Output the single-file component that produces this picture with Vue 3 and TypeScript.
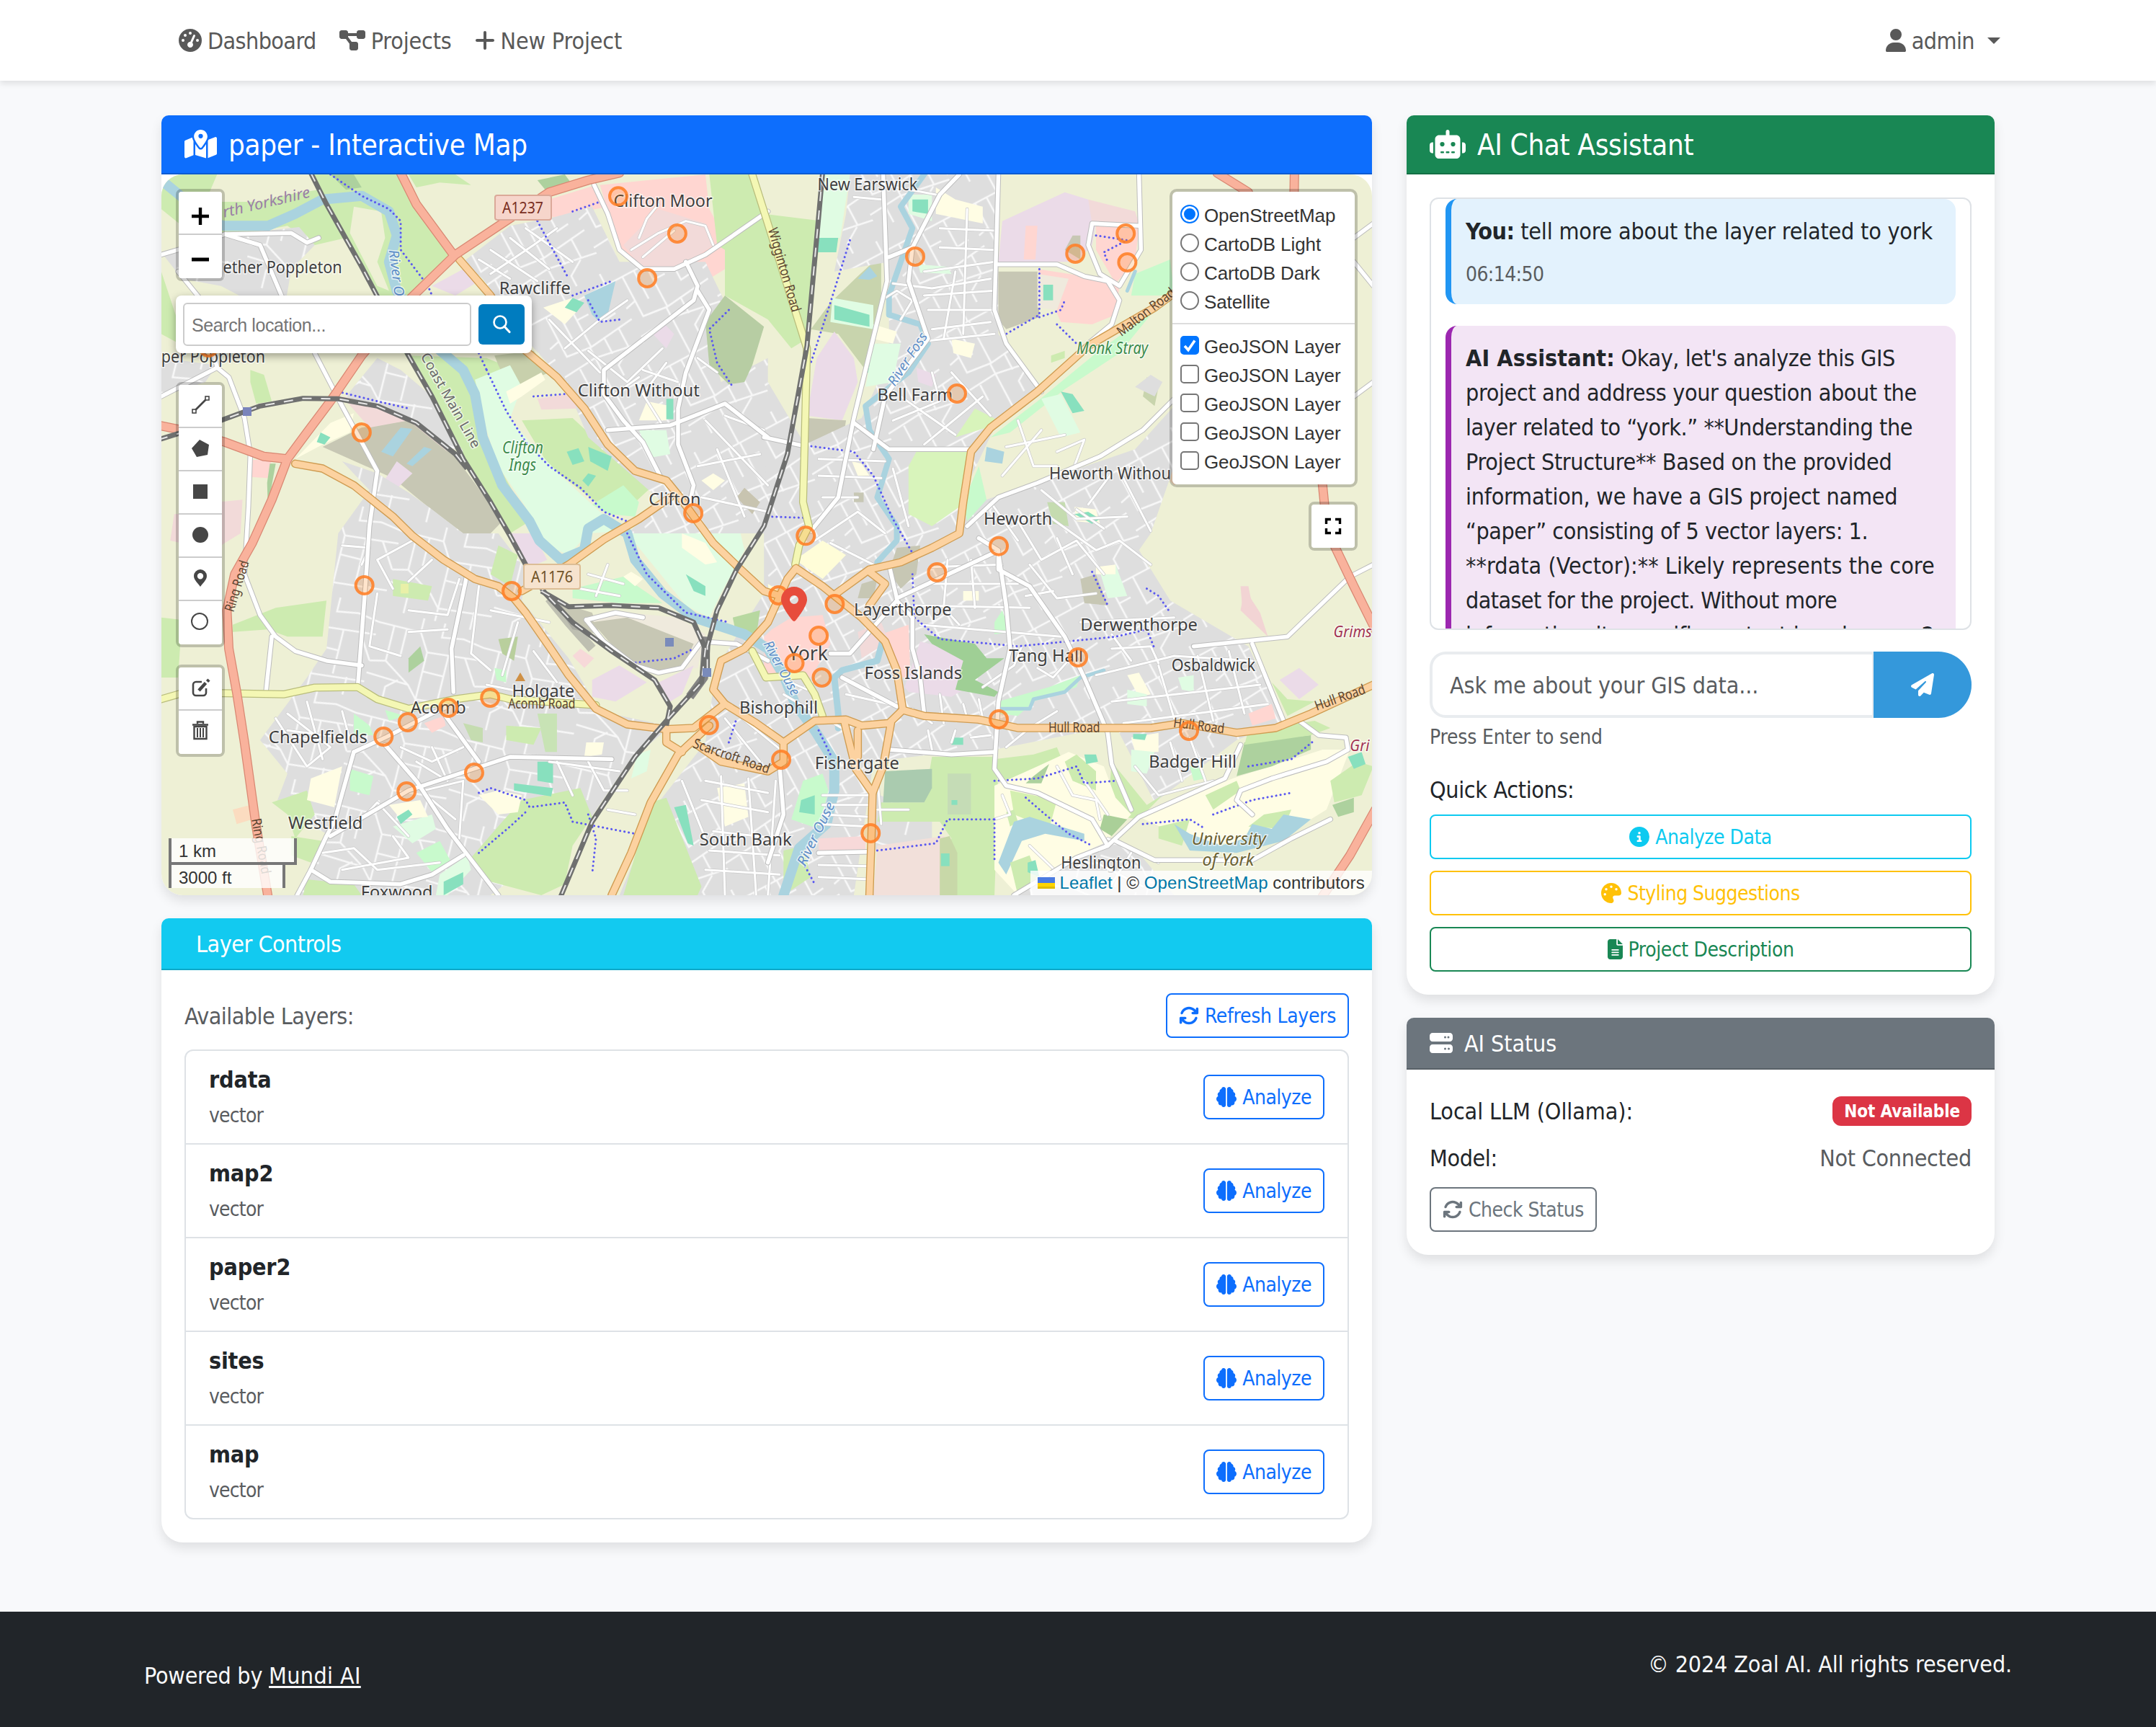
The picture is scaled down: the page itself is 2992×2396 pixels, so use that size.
<script setup lang="ts">
interface Icon { w: number; d: string }

const icons: Record<string, Icon> = {
  gauge: { w: 512, d: 'M0 256a256 256 0 1 1 512 0A256 256 0 1 1 0 256zM288 96a32 32 0 1 0 -64 0 32 32 0 1 0 64 0zM256 416c35.3 0 64-28.7 64-64c0-17.4-6.9-33.1-18.1-44.6L366 161.7c5.3-12.1-.2-26.3-12.3-31.6s-26.3 .2-31.6 12.3L257.9 288c-.6 0-1.3 0-1.9 0c-35.3 0-64 28.7-64 64s28.7 64 64 64zM176 144a32 32 0 1 0 -64 0 32 32 0 1 0 64 0zM96 288a32 32 0 1 0 0-64 32 32 0 1 0 0 64zm352-32a32 32 0 1 0 -64 0 32 32 0 1 0 64 0z' },
  diagram: { w: 576, d: 'M0 80C0 53.5 21.5 32 48 32h96c26.5 0 48 21.5 48 48V96H384V80c0-26.5 21.5-48 48-48h96c26.5 0 48 21.5 48 48v96c0 26.5-21.5 48-48 48H432c-26.5 0-48-21.5-48-48V160H192v16c0 1.7-.1 3.4-.3 5L272 288h96c26.5 0 48 21.5 48 48v96c0 26.5-21.5 48-48 48H272c-26.5 0-48-21.5-48-48V336c0-1.7 .1-3.4 .3-5L144 224H48c-26.5 0-48-21.5-48-48V80z' },
  plus: { w: 448, d: 'M256 80c0-17.7-14.3-32-32-32s-32 14.3-32 32V224H48c-17.7 0-32 14.3-32 32s14.3 32 32 32H192V432c0 17.7 14.3 32 32 32s32-14.3 32-32V288H400c17.7 0 32-14.3 32-32s-14.3-32-32-32H256V80z' },
  user: { w: 448, d: 'M224 256A128 128 0 1 0 224 0a128 128 0 1 0 0 256zm-45.7 48C79.8 304 0 383.8 0 482.3C0 498.7 13.3 512 29.7 512H418.3c16.4 0 29.7-13.3 29.7-29.7C448 383.8 368.2 304 269.7 304H178.3z' },
  map: { w: 576, d: 'M408 120c0 54.6-73.1 151.9-105.2 192c-7.7 9.6-22 9.6-29.6 0C241.1 271.9 168 174.6 168 120C168 53.7 221.7 0 288 0s120 53.7 120 120zm8 80.4c3.5-6.9 6.7-13.8 9.6-20.6c.5-1.2 1-2.5 1.5-3.7l116-46.4C558.9 123.4 576 135 576 152V422.8c0 9.8-6 18.6-15.1 22.3L416 503V200.4zM137.6 138.3c2.4 14.1 7.2 28.3 12.8 41.5c2.9 6.8 6.1 13.7 9.6 20.6V451.8L32.9 502.7C17.1 509 0 497.4 0 480.4V209.6c0-9.8 6-18.6 15.1-22.3l122.6-49zM327.8 332c13.9-17.4 35.7-45.7 56.2-77V504.3L192 449.4V255c20.5 31.3 42.3 59.6 56.2 77c20.5 25.6 59.1 25.6 79.6 0zM288 152a40 40 0 1 0 0-80 40 40 0 1 0 0 80z' },
  robot: { w: 640, d: 'M320 0c17.7 0 32 14.3 32 32V96H472c39.8 0 72 32.2 72 72V440c0 39.8-32.2 72-72 72H168c-39.8 0-72-32.2-72-72V168c0-39.8 32.2-72 72-72H288V32c0-17.7 14.3-32 32-32zM208 384c-8.8 0-16 7.2-16 16s7.2 16 16 16h32c8.8 0 16-7.2 16-16s-7.2-16-16-16H208zm96 0c-8.8 0-16 7.2-16 16s7.2 16 16 16h32c8.8 0 16-7.2 16-16s-7.2-16-16-16H304zm96 0c-8.8 0-16 7.2-16 16s7.2 16 16 16h32c8.8 0 16-7.2 16-16s-7.2-16-16-16H400zM264 256a40 40 0 1 0 -80 0 40 40 0 1 0 80 0zm152 40a40 40 0 1 0 0-80 40 40 0 1 0 0 80zM48 224H64V416H48c-26.5 0-48-21.5-48-48V272c0-26.5 21.5-48 48-48zm544 0c26.5 0 48 21.5 48 48v96c0 26.5-21.5 48-48 48H576V224h16z' },
  plane: { w: 512, d: 'M498.1 5.6c10.1 7 15.4 19.1 13.5 31.2l-64 416c-1.5 9.7-7.4 18.2-16 23s-18.9 5.4-28 1.6L284 427.7l-68.5 74.1c-8.9 9.7-22.9 12.9-35.2 8.1S160 493.2 160 480V396.4c0-4 1.5-7.8 4.2-10.7L331.8 202.8c5.8-6.3 5.6-16-.4-22s-15.7-6.4-22-.7L106 360.8 17.7 316.6C7.1 311.3 .3 300.7 0 288.9s5.9-22.8 16.1-28.7l448-256c10.7-6.1 23.9-5.5 34 1.4z' },
  info: { w: 512, d: 'M256 512A256 256 0 1 0 256 0a256 256 0 1 0 0 512zM216 336h24V272H216c-13.3 0-24-10.7-24-24s10.7-24 24-24h48c13.3 0 24 10.7 24 24v88h8c13.3 0 24 10.7 24 24s-10.7 24-24 24H216c-13.3 0-24-10.7-24-24s10.7-24 24-24zm40-208a32 32 0 1 1 0 64 32 32 0 1 1 0-64z' },
  palette: { w: 512, d: 'M512 256c0 .9 0 1.8 0 2.7c-.4 36.5-33.6 61.3-70.1 61.3H344c-26.5 0-48 21.5-48 48c0 3.4 .4 6.7 1 9.9c2.1 10.2 6.5 20 10.8 29.9c6.1 13.8 12.1 27.5 12.1 42c0 31.8-21.6 60.7-53.4 62c-3.5 .1-7 .2-10.6 .2C114.6 512 0 397.4 0 256S114.6 0 256 0S512 114.6 512 256zM128 288a32 32 0 1 0 -64 0 32 32 0 1 0 64 0zm0-96a32 32 0 1 0 0-64 32 32 0 1 0 0 64zM288 96a32 32 0 1 0 -64 0 32 32 0 1 0 64 0zm96 96a32 32 0 1 0 0-64 32 32 0 1 0 0 64z' },
  file: { w: 384, d: 'M64 0C28.7 0 0 28.7 0 64V448c0 35.3 28.7 64 64 64H320c35.3 0 64-28.7 64-64V160H256c-17.7 0-32-14.3-32-32V0H64zM256 0V128H384L256 0zM112 256H272c8.8 0 16 7.2 16 16s-7.2 16-16 16H112c-8.8 0-16-7.2-16-16s7.2-16 16-16zm0 64H272c8.8 0 16 7.2 16 16s-7.2 16-16 16H112c-8.8 0-16-7.2-16-16s7.2-16 16-16zm0 64H272c8.8 0 16 7.2 16 16s-7.2 16-16 16H112c-8.8 0-16-7.2-16-16s7.2-16 16-16z' },
  server: { w: 512, d: 'M64 32C28.7 32 0 60.7 0 96v64c0 35.3 28.7 64 64 64H448c35.3 0 64-28.7 64-64V96c0-35.3-28.7-64-64-64H64zm280 72a24 24 0 1 1 0 48 24 24 0 1 1 0-48zm48 24a24 24 0 1 1 48 0 24 24 0 1 1 -48 0zM64 288c-35.3 0-64 28.7-64 64v64c0 35.3 28.7 64 64 64H448c35.3 0 64-28.7 64-64V352c0-35.3-28.7-64-64-64H64zm280 72a24 24 0 1 1 0 48 24 24 0 1 1 0-48zm56 24a24 24 0 1 1 48 0 24 24 0 1 1 -48 0z' },
  sync: { w: 512, d: 'M105.1 202.6c7.7-21.8 20.2-42.3 37.8-59.8c62.5-62.5 163.8-62.5 226.3 0L386.3 160H352c-17.7 0-32 14.3-32 32s14.3 32 32 32H463.5c0 0 0 0 0 0h.4c17.7 0 32-14.3 32-32V80c0-17.7-14.3-32-32-32s-32 14.3-32 32v35.2L414.4 97.6c-87.5-87.5-229.3-87.5-316.8 0C73.2 122 55.6 150.7 44.8 181.4c-5.9 16.7 2.9 34.9 19.5 40.8s34.9-2.9 40.8-19.5zM39 289.3c-5 1.5-9.8 4.2-13.7 8.2c-4 4-6.7 8.8-8.1 14c-.3 1.2-.6 2.5-.8 3.8c-.3 1.7-.4 3.4-.4 5.1V432c0 17.7 14.3 32 32 32s32-14.3 32-32V396.9l17.6 17.5 0 0c87.5 87.4 229.3 87.4 316.7 0c24.4-24.4 42.1-53.1 52.9-83.7c5.9-16.7-2.9-34.9-19.5-40.8s-34.9 2.9-40.8 19.5c-7.7 21.8-20.2 42.3-37.8 59.8c-62.5 62.5-163.8 62.5-226.3 0l-.1-.1L125.6 352H160c17.7 0 32-14.3 32-32s-14.3-32-32-32H48.4c-1.6 0-3.2 .1-4.8 .3s-3.1 .5-4.6 1z' },
  brain: { w: 512, d: 'M184 0c30.9 0 56 25.1 56 56V456c0 30.9-25.1 56-56 56c-28.9 0-52.7-21.9-55.7-50.1c-5.2 1.4-10.7 2.1-16.3 2.1c-35.3 0-64-28.7-64-64c0-7.4 1.3-14.6 3.6-21.2C21.4 367.4 0 338.2 0 304c0-31.9 18.7-59.5 45.8-72.3C37.1 220.8 32 207 32 192c0-30.7 21.6-56.3 50.4-62.6C80.8 123.9 80 118 80 112c0-29.9 20.6-55.1 48.3-62.1C131.3 21.9 155.1 0 184 0zM328 0c28.9 0 52.6 21.9 55.7 49.9c27.8 7 48.3 32.1 48.3 62.1c0 6-.8 11.9-2.4 17.4c28.8 6.2 50.4 31.9 50.4 62.6c0 15-5.1 28.8-13.8 39.7C493.3 244.5 512 272.1 512 304c0 34.2-21.4 63.4-51.6 74.8c2.3 6.6 3.6 13.8 3.6 21.2c0 35.3-28.7 64-64 64c-5.6 0-11.1-.7-16.3-2.1c-3 28.2-26.8 50.1-55.7 50.1c-30.9 0-56-25.1-56-56V56c0-30.9 25.1-56 56-56z' },
}

const box = (name: string): string => `0 0 ${icons[name].w} 512`

const layers: string[] = ['rdata', 'map2', 'paper2', 'sites', 'map']
const baseMaps: string[] = ['OpenStreetMap', 'CartoDB Light', 'CartoDB Dark', 'Satellite']
const overlays: boolean[] = [true, false, false, false, false]

/* The reply is set line by line, each with its own tracking in pixels. */
interface Line { text: string; track: number }
const reply: Line[] = [
  { text: "Okay, let's analyze this GIS", track: -0.42 },
  { text: 'project and address your question about the', track: -0.36 },
  { text: 'layer related to “york.” **Understanding the', track: -0.4 },
  { text: 'Project Structure** Based on the provided', track: -0.32 },
  { text: 'information, we have a GIS project named', track: -0.23 },
  { text: '“paper” consisting of 5 vector layers: 1.', track: -0.46 },
  { text: '**rdata (Vector):** Likely represents the core', track: 0.06 },
  { text: 'dataset for the project. Without more', track: -0.6 },
  { text: 'information, its specific content is unknown. 2.', track: -0.3 },
]

/* Map geometry lives on its own survey grid; px/py bring it to screen units. */
const px = (x: number): number => (x - 7.4) / 1.8447
const py = (y: number): number => (y - 36) / 3

type Shape = [string, string]

const areas: Shape[] = [
  ['#cdebb0', '7,36 620,36 660,170 755,370 640,560 560,540 480,300 400,330 330,250 200,290 60,250 7,180'],
  ['#eef0d5', '150,36 390,36 410,100 330,120 260,150 120,150'],
  ['#eef0d5', '640,36 1100,36 1000,110 880,240 760,360 660,160'],
  ['#cdebb0', '640,36 760,36 800,80 720,70 660,90'],
  ['#add19e', '970,60 1040,36 1060,80 990,100'],
  ['#eef0d5', '500,170 570,190 580,300 560,400 590,520 560,500 490,280'],
  ['#add19e', '440,36 500,36 520,90 480,100'],
  ['#cdebb0', '7,440 60,700 120,800 7,700'],
  ['#cdebb0', '560,540 640,790 780,850 830,1130 950,1480 900,1530 780,1220 700,960 620,760'],
  ['#cdebb0', '235,850 270,870 290,980 250,990 235,900'],
  ['#cdebb0', '640,790 840,800 900,840 820,890 830,1000 730,1000'],
  ['#c8d0ac', '860,790 960,770 1000,860 900,930 870,830'],
  ['#cdebb0', '930,1060 1060,1050 1100,1110 1180,1240 1280,1310 1220,1400 1120,1400 1000,1250'],
  ['#e0fce3', '810,890 900,830 930,920 900,1050 960,1170 1030,1290 1130,1440 1190,1520 1100,1530 1050,1620 980,1570 940,1420 870,1250 840,1100'],
  ['#c8facc', '1110,1410 1190,1330 1230,1400 1220,1460 1150,1450'],
  ['#c7c7b4', '420,1170 520,1090 640,1060 740,1170 800,1300 880,1480 850,1530 780,1530 690,1420 600,1300'],
  ['#f2dad9', '470,960 560,990 680,1060 740,1190 640,1060 540,1090'],
  ['#ebdbe8', '610,1230 650,1280 600,1360 570,1330'],
  ['#aad3df', '620,1090 650,1095 600,1210 570,1190'],
  ['#aad3df', '680,1170 700,1180 650,1250 635,1240'],
  ['#fffde4', '350,1220 440,1070 500,1030 490,1110 420,1160'],
  ['#88e0be', '415,1110 440,1130 425,1160 405,1150'],
  ['#f2dad9', '150,1400 215,1390 210,1530 140,1600 30,1560 40,1450 150,1440'],
  ['#ffd6d1', '235,1225 290,1220 280,1300 235,1295'],
  ['#add19e', '285,1240 300,1240 280,1420 278,1320'],
  ['#ffd6d1', '1130,80 1400,36 1410,180 1450,300 1500,380 1380,500 1310,520 1240,430 1180,350'],
  ['#ffd6d1', '980,150 1120,80 1150,170 1010,215'],
  ['#ebdbe8', '700,500 780,430 820,480 760,540'],
  ['#cdebb0', '1410,36 1530,36 1560,200 1480,380 1430,330'],
  ['#cdebb0', '1450,340 1550,200 1700,230 1660,720 1620,760 1560,640 1450,540'],
  ['#e0fce3', '1700,36 1770,36 1745,300 1690,300'],
  ['#88e0be', '1690,300 1740,300 1735,360 1685,360'],
  ['#c8d4ad', '1790,460 1850,370 1850,560 1810,850 1740,700 1670,680 1720,570'],
  ['#e0fce3', '1725,550 1830,580 1830,680 1720,650'],
  ['#88e0be', '1730,580 1820,620 1820,670 1730,640'],
  ['#88e0be', '1840,740 1880,750 1870,820 1840,800'],
  ['#88e0be', '1820,820 1860,830 1850,870 1815,860'],
  ['#ebdbe8', '1730,690 1780,800 1790,900 1750,1060 1660,1040 1685,800'],
  ['#c7c7b4', '1660,1050 1760,1060 1750,1160 1660,1165'],
  ['#fffde4', '1600,1240 1655,1260 1650,1400 1620,1510 1565,1500'],
  ['#fbdcc0', '2570,1280 2600,1220 2620,1300 2600,1330'],
  ['#c8d4ad', '2530,880 2560,920 2550,1000 2520,960'],
  ['#dedede', '2500,920 2540,870 2570,900 2550,960'],
  ['#cdebb0', '7,1880 60,1890 50,2130 7,2130'],
  ['#fbdcc0', '190,2680 235,2660 240,2720 200,2740'],
]

const urban: string[] = [
  '170,290 360,255 400,330 340,430 320,620 230,560 160,500 60,470 7,360 100,330',
  '7,800 150,830 120,900 7,960',
  '780,400 900,250 1010,215 1110,170 1180,400 1400,400 1460,600 1400,660 1440,900 1560,800 1560,1530 1200,1530 1290,1400 1220,1300 1100,1130 1040,900 950,740 830,470',
  '460,1530 870,1530 940,1680 930,1810 1050,2050 1130,2270 1300,2330 1290,2360 1200,2490 1100,2730 850,3036 350,3036 430,2780 300,2660 330,2530 260,2390 380,2130 430,2010',
  '470,1230 560,1280 640,1360 700,1430 780,1530 460,1530 540,1350',
  '620,850 700,960 780,1190 740,1170 640,1060 480,960 560,800',
  '1770,36 2150,36 2150,700 2260,940 2140,1090 2070,1330 2100,1400 2500,1180 2600,1000 2600,1250 2540,1530 2510,1600 2590,1810 2790,2000 2880,2310 2760,2390 2550,2650 2450,2330 2140,2430 2140,2440 1980,2450 1830,2480 1780,3036 1180,3036 1280,2650 1400,2400 1420,2180 1440,2060 1550,1780 1550,1530 1560,900 1655,1160 1800,1050 1870,800 1870,400 1730,440 1760,200',
  '1830,2610 1980,2700 1980,2850 1830,2850',
  '2330,2850 2430,2800 2520,2880 2600,3036 2200,3036',
]

const overUrban: Shape[] = [
  ['#b7cda3', '1450,540 1550,670 1520,830 1500,900 1460,910 1410,830 1400,650'],
  ['#88e0be', '1045,1190 1075,1175 1090,1230 1060,1245'],
  ['#88e0be', '1100,1170 1160,1210 1150,1270 1105,1230'],
  ['#88e0be', '1100,1280 1120,1290 1100,1335 1085,1310'],
  ['#fffde4', '890,940 980,860 990,890 930,960 900,990'],
  ['#f2dad9', '970,970 1060,945 1070,1010 980,1015'],
  ['#f2dad9', '1190,330 1280,180 1400,240 1420,330 1320,440 1240,430'],
  ['#fffde4', '985,590 1060,550 1080,590 1040,660'],
  ['#88e0be', '1060,550 1090,570 1070,610 1040,590'],
  ['#aad3df', '1090,540 1170,480 1150,620 1130,650 1110,620'],
  ['#fffde4', '1250,980 1310,1000 1300,1060 1230,1060'],
  ['#88e0be', '1300,970 1318,970 1318,1055 1300,1055'],
  ['#e0fce3', '1230,1100 1300,1100 1310,1200 1260,1215'],
  ['#fffde4', '1390,1310 1420,1280 1450,1310 1420,1350'],
  ['#c8c4b0', '1480,1380 1500,1340 1540,1400 1520,1450'],
  ['#ebdbe8', '1290,650 1320,700 1300,760 1265,700'],
  ['#ebdbe8', '2160,230 2320,110 2380,140 2400,240 2390,330 2350,400 2150,400'],
  ['#ffd6d1', '2220,250 2250,250 2245,390 2215,390'],
  ['#c7c7b4', '2150,440 2250,440 2255,630 2170,680 2150,640'],
  ['#c7c7b4', '2340,290 2360,290 2360,390 2320,350'],
  ['#ffd6d1', '2250,430 2410,470 2460,500 2450,620 2390,660 2310,650'],
  ['#ffd6d1', '2400,250 2510,260 2500,400 2450,490 2400,350'],
  ['#f2dad9', '2380,140 2500,190 2510,240 2390,240'],
  ['#efeadd', '2250,450 2330,470 2300,600 2250,590'],
  ['#88e0be', '2265,495 2290,495 2290,560 2265,560'],
  ['#c8facc', '2500,450 2590,390 2600,540 2490,540'],
  ['#c8facc', '2250,980 2400,780 2550,600 2460,780 2320,930 2180,1110 2130,1130'],
  ['#eef0d5', '2170,700 2260,650 2360,740 2260,900 2200,820'],
  ['#cdebb0', '2285,790 2320,770 2320,800 2285,820'],
  ['#88e0be', '2310,940 2340,950 2370,1020 2340,1030'],
  ['#e0fce3', '2260,970 2310,950 2360,1110 2310,1130'],
  ['#d8f4bb', '1940,1190 2080,1190 2050,1420 1980,1500 1920,1450 1920,1250'],
  ['#d8f4bb', '2090,1010 2150,1060 2120,1090 2040,1130'],
  ['#c8facc', '2100,1250 2120,1390 2070,1480 2060,1400'],
  ['#aad3df', '2120,1170 2165,1190 2160,1240 2115,1230'],
  ['#aad3df', '1790,470 1820,420 1840,460 1820,475'],
  ['#e0fce3', '1920,120 1980,120 1980,230 1920,200'],
  ['#88e0be', '1930,140 1970,140 1970,200 1930,190'],
  ['#fffde4', '1990,90 2040,140 2110,170 2110,240 1990,200'],
  ['#e0fce3', '1945,410 2020,420 2030,450 1950,445'],
  ['#fffde4', '1830,660 1890,690 1880,740 1830,720'],
  ['#e0fce3', '1830,740 1900,740 1880,900 1810,920'],
  ['#fffde4', '2030,720 2090,740 2080,800 2035,780'],
  ['#ebdbe8', '1940,840 1990,870 1980,920 1945,900'],
  ['#fffde4', '1775,1230 1800,1240 1820,1290 1790,1290'],
  ['#c7c7b4', '1780,1360 1805,1360 1805,1400 1780,1400'],
  ['#c5dcb0', '2275,1400 2320,1400 2330,1500 2290,1490'],
  ['#fffde4', '2345,1420 2400,1430 2410,1490 2350,1480'],
  ['#88e0be', '2345,1450 2380,1440 2410,1470 2390,1490'],
  // Acomb and Holgate
  ['#cdebb0', '300,1840 430,1810 420,1960 330,1960 280,1930 190,1940 190,1910'],
  ['#cdebb0', '600,1720 700,1750 690,1810 600,1790'],
  ['#e9f0a8', '620,1740 640,1740 640,1780 620,1780'],
  ['#cdebb0', '870,1580 920,1620 900,1750 850,1700'],
  ['#b9cf9d', '870,1970 920,1960 910,2060 880,2030'],
  ['#add19e', '640,2050 670,2000 680,2060 640,2110'],
  ['#c8facc', '860,2090 890,2100 890,2150 865,2140'],
  ['#cdebb0', '890,2330 980,2340 960,2410 890,2390'],
  ['#c5dcb0', '780,2320 830,2340 830,2400 800,2390'],
  ['#cdebb0', '880,2730 930,2640 1080,2590 1110,2710 1060,2830 1040,2990 980,3036 850,2980 800,2880'],
  ['#cdebb0', '1220,2870 1260,2650 1300,2630 1390,3000 1380,3036 1190,3036'],
  ['#cdebb0', '290,2650 380,2600 400,2700 350,2800 330,2700'],
  ['#cdebb0', '340,2790 420,2810 390,2900 340,2870'],
  ['#cdebb0', '380,2970 500,2990 520,3036 370,3036'],
  ['#c8facc', '500,2280 540,2330 550,2370 500,2370'],
  ['#c8facc', '580,2265 630,2290 590,2310'],
  ['#c8facc', '490,2510 550,2540 540,2620 490,2600'],
  ['#c8facc', '660,2860 720,2810 750,2900 700,2940'],
  ['#e0fce3', '600,2750 700,2700 710,2760 650,2820'],
  ['#e0fce3', '720,2950 790,2870 800,2930 740,3036 710,3036'],
  ['#88e0be', '730,2980 780,2940 780,2990 730,3036'],
  ['#fffde4', '590,2660 670,2640 690,2710 620,2720'],
  ['#88e0be', '610,2710 640,2680 650,2700 620,2740'],
  ['#fffde4', '820,2620 870,2600 930,2620 920,2690 870,2700'],
  ['#fffde4', '390,2550 470,2500 450,2670 380,2640'],
  ['#88e0be', '910,2570 1010,2590 1005,2625 910,2600'],
  ['#88e0be', '970,2480 1010,2480 1010,2570 970,2560'],
  ['#c8e3b5', '970,2280 1020,2280 1020,2440 990,2440'],
  ['#fffde4', '1095,2400 1140,2400 1135,2450 1090,2460'],
  ['#ffd6d1', '680,2320 730,2290 735,2330 700,2360'],
  ['#f7d9d9', '1080,2010 1115,2050 1090,2090 1060,2040'],
  ['#c7c7b4', '1010,1810 1110,1860 1130,1950 1060,1930'],
  ['#c8facc', '1060,1760 1190,1710 1290,1820 1180,1820 1060,1800'],
  ['#efeadd', '1110,1890 1200,1860 1330,1880 1400,1950 1380,2090 1270,2110 1180,2030'],
  ['#c7c7b4', '1110,1900 1200,1880 1370,1990 1340,2100 1270,2110 1180,2030'],
  ['#ebdbe8', '1110,2140 1180,2080 1250,2150 1170,2230 1110,2210'],
  ['#ebdbe8', '1280,2150 1370,2080 1340,2200 1300,2240'],
  ['#ebdbe8', '900,1530 960,1530 995,1640 950,1670'],
  ['#e0fce3', '1200,1530 1490,1530 1500,1600 1440,1780 1410,1880 1350,1830 1260,1650'],
  ['#fffde4', '1340,1530 1400,1570 1430,1650 1400,1660 1340,1590'],
  ['#fffde4', '1190,1710 1210,1690 1240,1720 1220,1750'],
  ['#88e0be', '1350,1700 1400,1750 1400,1790 1370,1770'],
  ['#88e0be', '1320,2670 1350,2660 1370,2830 1355,2820'],
  ['#fffde4', '1430,2590 1500,2570 1510,2710 1450,2750'],
  ['#e0fce3', '1225,2450 1260,2430 1250,2520 1210,2550'],
  // City centre
  ['#b7d8a0', '1470,1880 1540,1850 1530,1960 1480,1960'],
  ['#fffdd8', '1630,1640 1700,1560 1760,1620 1700,1720'],
  ['#fffdd8', '1560,1740 1600,1780 1570,1860'],
  ['#ffd6d1', '1570,1930 1620,1880 1700,1870 1720,1990 1670,2130 1550,2120 1550,1960'],
  ['#ffd6d1', '1850,1950 1920,1910 1925,2130 1890,2130'],
  ['#f2dad9', '1790,1940 1850,1900 1870,1980 1800,2050'],
  ['#c7c7b4', '1890,1590 1950,1580 1940,1700 1900,1760 1870,1690'],
  ['#c7c7b4', '1800,1740 1840,1720 1830,1800 1790,1800'],
  ['#ebdbe8', '1910,2170 1950,1980 2070,2030 2060,2180 2030,2210 1920,2190'],
  ['#9fcf95', '1960,1950 2090,1990 2120,2050 2165,2050 2090,2140 2150,2190 2140,2210 2040,2180 2060,2060 1980,1990'],
  ['#c8facc', '2150,2230 2280,2170 2360,2120 2350,2170 2240,2230 2200,2290 2150,2280'],
  ['#c8facc', '2140,1900 2160,1850 2180,1940 2140,1950'],
  ['#fffde4', '2060,1770 2100,1770 2100,1810 2060,1810'],
  ['#e0fce3', '2410,1690 2450,1660 2480,1790 2430,1800'],
  ['#c7c7b4', '2360,1720 2400,1700 2430,1830 2370,1820'],
  ['#fffde4', '2400,1670 2450,1660 2450,1700 2400,1700'],
  ['#88e0be', '2030,2380 2060,2380 2060,2410 2030,2410'],
  ['#e0fce3', '2610,2130 2650,2120 2650,2190 2620,2180'],
  ['#fffde4', '2480,2120 2510,2110 2540,2200 2510,2210'],
  ['#e0fce3', '2480,2180 2530,2200 2530,2250 2480,2240'],
  ['#ebdbe8', '2870,2140 2920,2090 2970,2160 2920,2220'],
  ['#ffd6d1', '2790,2280 2850,2240 2860,2300 2800,2330'],
  ['#cdebb0', '2850,2150 2890,2220 2960,2230 2890,2290'],
  ['#fffde4', '2490,2380 2560,2360 2560,2440 2500,2440'],
  ['#88e0be', '2495,2365 2530,2365 2525,2390 2495,2385'],
  ['#e0fce3', '2490,2430 2550,2440 2530,2530 2490,2520'],
  ['#c8facc', '2640,2500 2670,2500 2680,2550 2650,2560'],
  ['#f2d4d4', '2780,1760 2820,1860 2840,1960 2770,1850'],
  ['#f2d4d4', '2770,1750 2790,1750 2800,1830 2775,1850'],
]

const south: Shape[] = [
  ['#c8facc', '1650,2560 1700,2530 1715,2600 1690,2760 1620,2720'],
  ['#88e0be', '1645,2640 1680,2620 1680,2700 1640,2690'],
  ['#cdebb0', '1600,2850 1650,2830 1670,2960 1600,3036'],
  ['#f7d9d9', '1690,2800 1810,2790 1810,2850 1690,2850'],
  ['#cdebb0', '1980,2460 2140,2460 2150,2590 2140,3036 1990,3036 2030,2800 2000,2730 1840,2730 1850,2650 1960,2650'],
  ['#aacbaf', '1860,2520 1980,2510 1980,2590 1960,2650 1855,2650'],
  ['#c5dcb6', '2020,2530 2080,2530 2080,2700 2020,2700'],
  ['#88e0be', '2030,2640 2045,2640 2045,2660 2030,2660'],
  ['#f2e0da', '1840,2830 2010,2790 2040,2860 2040,3036 1830,3036'],
  ['#c8d8a8', '2000,2800 2025,2790 2045,2860 2045,3036 2000,3036'],
  ['#88e0be', '2003,2862 2025,2862 2025,2915 2003,2915'],
  ['#cdebb0', '2140,2470 2240,2450 2300,2420 2320,2500 2260,2580 2150,2560'],
  ['#cdebb0', '2440,2480 2530,2660 2570,2620 2510,2720 2430,2700'],
  ['#fffde4', '2140,2580 2250,2500 2330,2440 2420,2500 2450,2630 2490,2700 2420,2820 2350,2870 2200,3036 2140,2930'],
  ['#cdebb0', '2320,2480 2350,2450 2400,2520 2400,2600 2340,2560'],
  ['#88e0be', '2370,2450 2400,2450 2405,2480 2375,2490'],
  ['#aacf98', '2420,2700 2480,2720 2440,2790 2410,2760'],
  ['#add19e', '2240,2540 2280,2490 2260,2570 2220,2570'],
  ['#d4efb0', '2180,2600 2300,2640 2280,2760 2190,2700'],
  ['#cdebb0', '2170,2690 2190,2680 2200,2730 2180,2750'],
  ['#fffde4', '2510,2710 2750,2550 2980,2430 3050,2430 2990,2680 2850,2820 2650,2820 2550,2740'],
  ['#add19e', '2780,2400 2950,2370 2950,2430 2850,2500 2760,2540'],
  ['#cdebb0', '2790,2350 2960,2310 3000,2340 2950,2370 2780,2410'],
  ['#cdebb0', '2680,2620 2760,2560 2770,2600 2700,2680'],
  ['#cdebb0', '3000,2560 3070,2480 3110,2500 3080,2620 3010,2650'],
  ['#add19e', '3005,2660 3060,2630 3060,2690 3020,2710'],
  ['#88e0be', '3045,2460 3080,2440 3090,2490 3060,2510'],
  ['#cdebb0', '2830,2700 2900,2680 2880,2760 2790,2750'],
  ['#cdebb0', '2560,2750 2640,2720 2620,2830 2560,2800'],
  ['#aad3df', '2780,2800 2800,2740 2850,2760 2880,2700 2950,2720 2880,2810 2760,2860 2640,2850 2600,2740 2640,2780 2720,2830'],
  ['#aad3df', '2190,2730 2230,2710 2310,2750 2370,2780 2370,2810 2270,2780 2210,2810 2170,2950 2150,2900'],
  ['#cdebb0', '2180,2900 2230,2870 2250,2960 2200,3036'],
  ['#88e0be', '2225,2900 2245,2890 2255,2960 2225,2940'],
]

const streams: Shape[] = [
  ['14', '7,60 60,130 110,230 170,250 280,250 350,200 420,140 520,125 590,190 610,290 590,400 610,520 700,740 780,850 810,950 830,1130 880,1330 950,1480 975,1560 1030,1640 1090,1600 1100,1510 1140,1470 1200,1530 1220,1640 1290,1780 1370,1880 1500,1950 1560,2010 1600,2120 1630,2240 1680,2350 1730,2480 1730,2600 1710,2740 1640,2840 1600,3036'],
  ['8', '1960,36 1900,170 1930,260 1870,540 1870,620 1950,660 1970,740 1920,860 1810,1000 1820,1100 1870,1220 1840,1380 1890,1500 1890,1560 1840,1650'],
  ['9', '1855,1970 1840,2060 1750,2100 1730,2130 1740,2280 1740,2340'],
  ['5', '2150,2260 2230,2260 2240,2220 2320,2190 2360,2130 2420,2100'],
  ['5', '2500,440 2480,520'],
]

const white: string[] = [
  '1115,80 1150,200 1180,350 1240,430 1320,430 1400,370 1560,190',
  '1350,400 1380,500 1370,560 1140,850 1140,950 1190,1060 1240,1150 1290,1310',
  '1380,520 1410,600 1350,860 1330,1010 1330,1160 1370,1330 1360,1400',
  '1150,1100 1310,1080 1450,990 1560,1130',
  '7,370 90,330 170,285 260,330 320,560', '170,285 340,280 380,320 410,300',
  '7,960 150,840 180,880 220,1050 235,1200 230,1420 220,1700 260,1870 300,1960 350,2020 430,2060 520,2080',
  '290,1960 275,2190', '50,440 110,560 150,840',
  '400,780 470,1000 560,1270 540,1500 530,1740 510,2170',
  '500,2440 580,2380 700,2280 740,2250', '500,2440 450,2730 430,2790 390,2930 355,3036',
  '580,2410 660,2560 740,2760 870,3036', '440,2790 640,2600 900,2460 1160,2470',
  '790,1700 750,2010 755,2190', '735,2290 820,2480', '390,2930 440,2980 620,2990 700,2950 780,2870',
  '1855,36 1865,480 1780,1050 1740,1380 1670,1520', '1780,1070 1870,1180 2080,1180',
  '2050,36 2000,120 1930,340 1920,480 1970,720 1860,960 1830,1180', '1870,380 1930,340',
  '2150,36 2140,600 2170,740 2260,940', '2150,410 2300,410 2370,460 2430,480 2460,560 2440,660 2380,740',
  '2510,36 2515,350 2460,500 2410,450 2380,330 2390,240 2510,250',
  '1550,1130 1650,1165', '2600,970 2520,1100 2410,1210 2250,1320 2150,1380 2070,1500',
  '2150,1610 2170,1830 2180,2010 2150,2230 2140,2510 2170,2580 2250,2610 2390,2720 2430,2830 2350,2880 2190,3036',
  '2430,2830 2510,2710 2730,2550 2770,2410', '2800,1990 2880,2310',
  '2100,1550 2150,1600 2150,1680 2230,1750 2320,1960 2370,2130 2430,2360 2440,2490 2490,2680',
  '1890,1800 2140,1610', '1890,1810 1930,1880 1930,2010 1950,2130 1960,2280', '1870,1660 1890,1800',
  '1750,2130 1890,2250', '1720,2030 1770,2030 1890,1810', '1870,2430 2030,2450 2140,2440',
  '2920,2310 2970,2370 3040,2380 3045,2430 2990,2480 2850,2550 2770,2600 2760,2640 2800,2700', '2650,2000 2890,1960 3050,1710 3110,1660',
  '1095,1890 1170,1860 1240,1880', '1095,1890 1140,1980 1220,2080 1280,2110 1340,2090 1390,1980 1480,1990 1560,2060',
  '2450,2810 2550,2890 2800,2890 2900,2800 3000,2720', '3060,300 3110,240', '3060,400 3110,500', '3060,960 3110,900',
  '1590,2500 1600,2700 1560,2900', '1690,2860 1820,2855',
]

const minor: string[] = [
  '820,390 900,470', '850,350 970,480', '900,300 1000,430', '940,260 1060,400', '850,450 960,330 1020,260', '1000,640 1130,860', '1040,760 1130,640 1200,560',
  '1210,350 1280,280 1350,230 1400,250 1420,330', '1240,380 1320,270', '1280,160 1250,220 1230,300', '1100,770 1200,900 1290,760', '1240,850 1330,900', '1160,960 1230,880', '1380,800 1430,860', '1300,820 1240,950 1290,1080',
  '1400,1060 1560,1330', '1430,1180 1500,1460', '1380,1250 1540,1200', '1390,1380 1560,1440', '1450,1040 1550,1100',
  '470,1580 540,1590 520,1660', '650,1560 560,1640 600,1760', '700,1640 640,1730', '770,1720 740,1870 640,1850', '560,1780 540,2000 620,2040', '640,1940 740,1930', '820,1750 800,2030 850,2100', '850,1850 1000,1900', '920,1900 880,2120', '960,2020 1020,2150', '840,2160 960,2200 1100,2230',
  '300,2300 380,2500 440,2420 330,2280', '330,2350 470,2380', '380,2230 420,2470', '470,2270 490,2390', '620,2420 700,2480 780,2420', '660,2480 740,2560 700,2420', '680,2600 780,2560 770,2800', '520,2720 560,2650 640,2790', '700,2640 760,2720', '420,2860 500,2840 560,2930 720,2900', '470,2930 640,2880 600,2790', '1020,2480 1060,2620', '1100,2480 1140,2600 1200,2600', '1150,2680 1220,2700', '1000,2480 1180,2520',
  '1780,130 1850,140', '1860,80 1990,120', '1880,490 1980,510 2130,470', '1960,540 2140,520', '1970,600 2140,600', '1980,680 2130,650', '2000,260 2140,270', '2000,340 2140,350', '1960,440 2140,400', '1960,730 2140,700', '2040,440 2010,720', '2070,180 2060,700', '1850,560 1890,520 1930,560 1900,640',
  '1900,960 2040,1120', '1880,1060 2000,980 1980,860', '1960,1160 2110,960', '2030,860 2130,1040', '2170,1170 2320,1120', '2200,1060 2240,1250 2300,1250', '2160,1290 2260,1100', '2300,1190 2370,1140 2340,1270',
  '1690,1220 1860,1230', '1690,1290 1850,1300', '1700,1380 1790,1380', '1880,1260 1920,1500', '1680,1560 1790,1440 1860,1530', '1720,1570 1830,1660',
  '2200,1480 2260,1640 2350,1560 2420,1700', '2280,1460 2400,1600 2460,1560 2540,1660', '2350,1430 2420,1510', '2260,1350 2350,1470 2480,1460', '2130,1400 2200,1560', '2440,1280 2380,1410', '2470,1300 2540,1520',
  '1980,1670 2160,1660', '1980,1740 2200,1740', '1930,1830 2230,1840', '1950,1910 2310,1960', '2020,1640 2010,1840 2050,1910', '2080,1640 2090,1840', '2220,1790 2290,1770', '2230,1660 2300,1800 2400,1780', '2300,1550 2340,1700', '2360,1900 2600,1880',
  '2250,2090 2290,2130 2340,2040', '2210,2000 2190,2080 2110,2170', '2400,2120 2600,2040 2800,2060', '2440,2230 2820,2160', '2470,2320 2840,2240', '2560,2080 2600,2300', '2660,2040 2700,2310', '2740,2020 2780,2280', '2440,1950 2490,2060', '2500,2500 2560,2620 2700,2560', '2590,2400 2620,2560', '2640,2380 2680,2560', '2600,2480 2740,2460', '2440,2010 2540,2000 2560,2070',
  '1590,2130 1660,2180', '1600,2200 1760,2350', '1760,2200 1870,2240', '1930,2260 1980,2320', '2000,2200 2010,2320', '2060,2240 2070,2300', '2100,2220 2110,2300', '1970,2350 1980,2430', '2040,2350 2030,2400', '2080,2380 2130,2370', '2170,2420 2230,2340 2300,2270',
  '1450,2300 1540,2480', '1480,2280 1600,2440', '1400,2560 1560,2610', '1390,2640 1560,2690', '1340,2560 1400,2800', '1420,2770 1590,2800', '1410,2850 1590,2870', '1400,2930 1590,2950', '1440,2540 1450,3036', '1510,2550 1530,3036', '1580,2560 1560,3036',
  '1700,2620 1820,2620', '1700,2660 1820,2660', '1700,2700 1820,2710', '1690,2740 1820,2750', '1840,2540 1850,2740', '1840,2680 1920,2680', '1690,2910 1820,2915', '1690,2960 1820,2970', '2430,2800 2560,2900', '2400,2900 2520,3000', '2490,2860 2440,2990', '1150,1660 1120,1790', '1100,1700 1190,1740', '1080,1760 1180,1790',
  '2160,2620 2180,2700 2140,2720', '2300,2500 2340,2620 2400,2640 2410,2720', '2370,2560 2430,2700', '2230,2830 2300,2940',
]

const secondary: string[] = [
  '1520,36 1550,190 1610,500 1660,760 1655,1100 1650,1400 1665,1500 1640,1580 1630,1660',
  '7,2220 60,2195 170,2195 320,2200 400,2172 510,2170 560,2220 640,2260 760,2220 850,2200 900,2220 1120,2245',
  '1520,2020 1555,2130 1650,2120 1680,2200 1700,2290',
]
const primary: string[] = [
  '770,390 850,540 940,770 1020,880 1090,1010 1150,1160 1220,1270 1300,1310 1330,1370 1420,1570 1490,1680 1550,1770 1590,1790',
  '350,1240 420,1260 500,1330 600,1460 650,1540 730,1640 810,1720 870,1750 910,1800 940,1860 1000,2000 1050,2120 1120,2260 1200,2325 1300,2345 1370,2340 1450,2240 1420,2180 1440,2060 1500,2010 1560,1900 1610,1720 1632,1675 1700,1750 1800,1880 1860,1980 1890,2100 1905,2260',
  '1310,1380 1230,1470 1140,1555 1050,1660 930,1770', '1450,2240 1530,2320 1600,2400',
  '1410,2330 1330,2450 1260,2650 1210,2860 1160,3036', '1300,2350 1300,2400 1340,2440',
  '1370,2400 1440,2480 1560,2520 1600,2480 1600,2400 1680,2310 1760,2305 1800,2330 1870,2320 1905,2265 1960,2290 2100,2305 2200,2340 2540,2340 2620,2320 2760,2360 2860,2340 2950,2280 3110,2160',
  '1735,1780 1820,1680 1900,1650 1980,1590 2050,1530 2060,1400 2080,1190 2130,1090 2250,940 2380,750 2550,590 2600,530',
  '1820,1690 1860,1740 1820,1830', '1755,2310 1785,2510 1828,2610 1825,2800 1820,3036', '1875,2320 1855,2500 1828,2610', '1790,2350 1790,2460',
]
const trunk: string[] = [
  '1180,30 1100,60 1000,110 880,240 760,370 640,560 520,790 440,980 380,1110 330,1220 290,1390 240,1570 195,1700 175,1850 180,2010 200,2190 220,2400 250,2750 280,3040',
  '620,30 660,160 755,370', '0,1080 60,1100 170,1150 270,1210 330,1220',
  '2710,30 2790,110', '2908,30 2905,300 2960,900 2980,1330 2988,1460 3010,1580 3060,1750 3115,1930', '3115,2680 3050,2870 2980,3040',
]
const rails: string[] = [
  '390,30 430,160 520,420 640,790 700,960 780,1220 850,1400 900,1540 940,1660 990,1780 1060,1900 1160,2020 1270,2140 1310,2250 1300,2330',
  '0,1140 160,1060 260,1000 370,968 460,970 560,1000 660,1070 760,1200 790,1260',
  '980,1770 1050,1835 1160,1830 1280,1840 1370,1900 1400,2010 1390,2150 1300,2310 1220,2460 1110,2730 1030,3040',
  '1700,30 1660,750 1610,1200 1550,1500 1480,1680 1430,1850 1405,2000 1405,2100',
]
const paths: string[] = [
  '440,36 520,125 590,180 620,230 620,350 690,500 700,540', '970,230 1050,470', '1060,190 1130,150', '840,850 890,1020 940,1150 1000,1250 1080,1340 1140,1440 1200,1480', '820,780 840,850',
  '460,940 560,980 640,1010', '1460,600 1410,680 1430,820 1470,920', '960,960 1040,950', '1060,540 1160,480', '1100,560 1130,650 1180,640', '1200,1530 1250,1700 1350,1860 1460,1900',
  '1770,310 1720,570 1670,820', '1660,1165 1780,1190 1830,1290 1880,1470 1940,1640', '1560,1460 1650,1465', '2255,430 2255,620 2170,700', '2400,290 2480,310 2420,360 2430,400', '2255,630 2310,600 2320,560', '2300,660 2350,740',
  '1930,1700 1935,1880 2000,1970 2200,2000 2450,1960 2530,1930 2550,2010', '2390,1690 2430,1830', '2140,2560 2250,2550 2350,2500 2370,2570 2450,2560', '820,2610 850,2590 940,2640 950,2670 1040,2650 1060,2730 1220,2780',
  '820,2860 900,2750 940,2690', '1840,2850 1990,2820 2020,2720 2140,2720', '2520,2740 2640,2720 2680,2760', '2790,2500 2900,2470 2960,2390', '2700,2700 2800,2640 2900,2610', '1460,2400 1480,2300', '1100,2700 1120,2800 1110,2950',
  '1210,2070 1320,2050 1370,2010', '1650,2900 1680,2990', '2220,2630 2270,2700 2330,2780 2390,2830', '2140,2720 2140,2900', '2530,1760 2560,1790 2590,1860', '1690,2350 1720,2450',
]

interface Label { t: string; x: number; y: number; w: number; k?: string; x2?: number; y2?: number }
const labels: Label[] = [
  { t: 'Clifton Moor', x: 1165, y: 170, w: 253 }, { t: 'Rawcliffe', x: 872, y: 533, w: 183 },
  { t: 'ether Poppleton', x: 165, y: 446, w: 305 }, { t: 'per Poppleton', x: 7, y: 820, w: 266 },
  { t: 'Clifton Without', x: 1073, y: 960, w: 312 }, { t: 'Clifton', x: 1255, y: 1412, w: 133 },
  { t: 'Clifton', x: 880, y: 1196, w: 105, k: 'park' }, { t: 'Ings', x: 897, y: 1268, w: 70, k: 'park' },
  { t: 'New Earswick', x: 1687, y: 101, w: 256 }, { t: 'Bell Farm', x: 1840, y: 977, w: 193 },
  { t: 'Monk Stray', x: 2350, y: 784, w: 183, k: 'park' }, { t: 'Heworth Withou', x: 2280, y: 1306, w: 312 },
  { t: 'Heworth', x: 2112, y: 1494, w: 176 }, { t: 'Acomb', x: 645, y: 2280, w: 142 },
  { t: 'Holgate', x: 905, y: 2211, w: 160 }, { t: 'Acomb Road', x: 895, y: 2258, w: 172, k: 'road' },
  { t: 'Chapelfields', x: 282, y: 2402, w: 253 }, { t: 'Westfield', x: 332, y: 2760, w: 191 },
  { t: 'Foxwood', x: 518, y: 3048, w: 184 }, { t: 'South Bank', x: 1385, y: 2829, w: 236 },
  { t: 'Bishophill', x: 1487, y: 2279, w: 201 }, { t: 'York', x: 1612, y: 2058, w: 102, k: 'city' },
  { t: 'Layerthorpe', x: 1780, y: 1872, w: 250 }, { t: 'Foss Islands', x: 1807, y: 2136, w: 250 },
  { t: 'Tang Hall', x: 2177, y: 2065, w: 190 }, { t: 'Derwenthorpe', x: 2360, y: 1936, w: 300 },
  { t: 'Osbaldwick', x: 2593, y: 2102, w: 215 }, { t: 'Badger Hill', x: 2535, y: 2504, w: 225 },
  { t: 'Fishergate', x: 1680, y: 2510, w: 216 }, { t: 'Heslington', x: 2310, y: 2926, w: 205 },
  { t: 'University', x: 2645, y: 2827, w: 190, k: 'uni' }, { t: 'of York', x: 2672, y: 2912, w: 133, k: 'uni' },
  { t: 'Hull Road', x: 2278, y: 2357, w: 132, k: 'road' },
  { t: 'Hull Road', x: 2597, y: 2336, w: 131, k: 'road', x2: 2727, y2: 2362 },
  { t: 'Hull Road', x: 2965, y: 2268, w: 140, k: 'road', x2: 3092, y2: 2195 },
  { t: 'Grims', x: 3008, y: 1962, w: 98, k: 'ward' }, { t: 'Gri', x: 3050, y: 2436, w: 50, k: 'ward' },
  { t: 'Ring Road', x: 192, y: 1860, w: 0, k: 'road', x2: 232, y2: 1650 },
  { t: 'Ring Road', x: 238, y: 2720, w: 0, k: 'road', x2: 264, y2: 2950 },
  { t: 'Coast Main Line', x: 670, y: 792, w: 0, k: 'line', x2: 805, y2: 1180 },
  { t: 'River O', x: 590, y: 352, w: 0, k: 'river', x2: 605, y2: 545 },
  { t: 'rth Yorkshire', x: 168, y: 215, w: 0, k: 'county', x2: 390, y2: 130 },
  { t: 'Wigginton Road', x: 1560, y: 265, w: 0, k: 'road', x2: 1622, y2: 612 },
  { t: 'Malton Road', x: 2465, y: 712, w: 0, k: 'road', x2: 2605, y2: 535 },
  { t: 'River Foss', x: 1885, y: 920, w: 0, k: 'river', x2: 1970, y2: 710 },
  { t: 'River Ouse', x: 1548, y: 1990, w: 0, k: 'river', x2: 1622, y2: 2210 },
  { t: 'River Ouse', x: 1655, y: 2918, w: 0, k: 'river', x2: 1732, y2: 2660 },
  { t: 'Scarcroft Road', x: 1366, y: 2420, w: 0, k: 'road', x2: 1560, y2: 2530 },
]
const spot = (l: Label): string => {
  const x = px(l.x)
  const y = py(l.y)
  if (l.x2 === undefined || l.y2 === undefined) return `translate(${x} ${y})`
  const a = (Math.atan2(py(l.y2) - y, px(l.x2) - x) * 180) / Math.PI
  return `translate(${x} ${y}) rotate(${a})`
}
const len = (l: Label): number =>
  l.x2 === undefined || l.y2 === undefined ? l.w / 1.8447 : Math.hypot(px(l.x2) - px(l.x), py(l.y2) - py(l.y))

const markers: [number, number][] = [
  [1177, 127], [1328, 282], [1251, 468], [128, 756], [520, 1110], [1369, 1446], [1937, 378], [2347, 366], [2476, 282], [2480, 402],
  [2044, 948], [1657, 1540], [2151, 1583], [527, 1746], [904, 1770], [742, 2256], [849, 2214], [638, 2316], [576, 2376], [808, 2526],
  [635, 2604], [1409, 2328], [1993, 1692], [1587, 1788], [1731, 1824], [1690, 1956], [1628, 2070], [1698, 2130], [2354, 2046],
  [2151, 2304], [2638, 2352], [1594, 2472], [1823, 2778],
]
</script>

<template>
  <div class="page">
    <header class="navbar">
      <nav class="links">
        <a class="link l1"><svg class="ic" :viewBox="box('gauge')"><path :d="icons.gauge.d" /></svg><span>Dashboard</span></a>
        <a class="link l2"><svg class="ic" :viewBox="box('diagram')"><path :d="icons.diagram.d" /></svg><span>Projects</span></a>
        <a class="link l3"><svg class="ic" :viewBox="box('plus')"><path :d="icons.plus.d" /></svg><span>New Project</span></a>
      </nav>
      <a class="link account"><svg class="ic" :viewBox="box('user')"><path :d="icons.user.d" /></svg><span>admin</span><i class="caret"></i></a>
    </header>

    <main class="main">
      <div class="left">
        <section class="card">
          <div class="head blue"><svg class="ic" :viewBox="box('map')"><path :d="icons.map.d" /></svg><span class="t-map">paper - Interactive Map</span></div>
          <div class="map">
            <svg class="tiles" viewBox="7.4 36 3099.1 3000" preserveAspectRatio="none">
              <defs>
                <pattern id="streets" width="150" height="130" patternUnits="userSpaceOnUse" patternTransform="scale(1.8447 3) rotate(14)">
                  <path d="M0 20H60L75 45L150 38M22 20V70L60 95M60 20V0M75 45V130M0 92L60 95L75 112L150 105M105 42V105M128 40L150 75M0 75L22 70M40 20V60M105 72H75M125 105V130M30 130V105L45 92M90 0V20L120 15L150 20" fill="none" stroke="#f8f8f8" stroke-width="2.600" />
                </pattern>
                <pattern id="lanes" width="120" height="140" patternUnits="userSpaceOnUse" patternTransform="scale(1.8447 3) rotate(-28)">
                  <path d="M0 18H120M16 18V80L50 84V140M34 18V62M52 18V84L120 76M70 42H52M86 18V60L104 58M0 104L50 100L120 112M74 80V106M98 78V108M0 60L16 56M24 104V128M74 140V124L96 110M110 0V18M50 0V18" fill="none" stroke="#f8f8f8" stroke-width="2.600" />
                </pattern>
              </defs>
              <rect x="0" y="0" width="3200" height="3100" fill="#eef0d5" />
              <polygon v-for="(a, i) in areas" :key="'a' + i" :points="a[1]" :fill="a[0]" />
              <g v-for="(u, i) in urban" :key="'u' + i">
                <polygon :points="u" fill="#dedede" />
                <polygon :points="u" :fill="i % 4 === 2 ? 'url(#lanes)' : 'url(#streets)'" />
              </g>
              <polygon v-for="(a, i) in overUrban" :key="'o' + i" :points="a[1]" :fill="a[0]" />
              <polygon v-for="(a, i) in south" :key="'s' + i" :points="a[1]" :fill="a[0]" />
              <g class="ln">
                <polyline v-for="(s, i) in streams" :key="'w' + i" :points="s[1]" stroke="#aad3df" :stroke-width="s[0]" />
                <polyline v-for="(p, i) in minor" :key="'mc' + i" :points="p" stroke="#c9c9c9" stroke-width="4.400" />
                <polyline v-for="(p, i) in minor" :key="'m' + i" :points="p" stroke="#ffffff" stroke-width="3" />
                <polyline v-for="(p, i) in paths" :key="'f' + i" :points="p" stroke="#5a58f0" stroke-width="3" stroke-dasharray="0.1 6" />
                <polyline v-for="(p, i) in white" :key="'tc' + i" :points="p" stroke="#bcbcbc" stroke-width="7.500" />
                <polyline v-for="(p, i) in white" :key="'t' + i" :points="p" stroke="#ffffff" stroke-width="5.500" />
                <polyline v-for="(p, i) in secondary" :key="'sc' + i" :points="p" stroke="#b9bd7c" stroke-width="11" />
                <polyline v-for="(p, i) in secondary" :key="'s' + i" :points="p" stroke="#f4f7b4" stroke-width="8.500" />
                <polyline v-for="(p, i) in primary" :key="'pc' + i" :points="p" stroke="#cf9c52" stroke-width="11.500" />
                <polyline v-for="(p, i) in primary" :key="'p' + i" :points="p" stroke="#fcd2a0" stroke-width="8.800" />
                <polyline v-for="(p, i) in trunk" :key="'kc' + i" :points="p" stroke="#d98873" stroke-width="13" />
                <polyline v-for="(p, i) in trunk" :key="'k' + i" :points="p" stroke="#f9b29c" stroke-width="10.500" />
              </g>
              <g class="ln rail">
                <polyline points="1000,1800 1050,1900 1110,2010" stroke="#8f8f8f" stroke-width="13" opacity="0.500" />
                <polyline points="1403,1960 1396,2130 1360,2210" stroke="#858585" stroke-width="12" />
                <polyline v-for="(p, i) in rails" :key="'rc' + i" :points="p" stroke="#6f706f" stroke-width="7" />
                <polyline v-for="(p, i) in rails" :key="'r' + i" :points="p" stroke="#e8e8e8" stroke-width="2" stroke-dasharray="13 13" />
              </g>
            </svg>

            <svg class="tiles" viewBox="0 0 1680 1000">
              <rect x="113" y="323" width="12" height="12" fill="#7a84bb" />
              <rect x="699" y="643" width="12" height="12" fill="#7a8bbb" />
              <rect x="751" y="685" width="12" height="12" fill="#7a8bbb" />
              <path d="M491 703l7-12 7 12z" fill="#cf9045" />
              <rect x="463" y="29" width="78" height="34" rx="3" fill="#f6d5cb" stroke="#dba999" stroke-width="2" />
              <rect x="503" y="541" width="78" height="34" rx="3" fill="#f6e3ce" stroke="#dcbd96" stroke-width="2" />
              <text class="ref trunk" x="473" y="54" textLength="57" lengthAdjust="spacingAndGlyphs">A1237</text>
              <text class="ref" x="513" y="566" textLength="58" lengthAdjust="spacingAndGlyphs">A1176</text>
              <text v-for="(l, i) in labels" :key="i" :class="['lb', l.k]" :transform="spot(l)" :textLength="len(l)" lengthAdjust="spacingAndGlyphs">{{ l.t }}</text>
              <circle v-for="(m, i) in markers" :key="'c' + i" :cx="px(m[0])" :cy="py(m[1])" r="12" fill="#ff7800" fill-opacity="0.2" stroke="#ff7f27" stroke-opacity="0.88" stroke-width="4" />
              <path transform="translate(860 572) scale(0.09375)" fill="#e74c3c" d="M215.7 499.2C267 435 384 279.4 384 192C384 86 298 0 192 0S0 86 0 192c0 87.4 117 243 168.3 307.2c12.3 15.3 35.1 15.3 47.4 0zM192 128a64 64 0 1 1 0 128 64 64 0 1 1 0-128z" />
            </svg>

            <div class="bar zoom">
              <b><svg viewBox="0 -4 60 60"><path d="M18 30H42M30 18V42" stroke="#000" stroke-width="4.400" /></svg></b>
              <b><svg viewBox="0 -4 60 60"><path d="M18 30H42" stroke="#000" stroke-width="4.800" /></svg></b>
            </div>
            <div class="search">
              <div class="field">Search location...</div>
              <div class="go"><svg viewBox="0 0 64 56"><circle cx="30" cy="25" r="8.500" fill="none" stroke="#fff" stroke-width="2.600" /><path d="M36 31L43 38.500" stroke="#fff" stroke-width="3.200" stroke-linecap="round" /></svg></div>
            </div>
            <div class="bar draw">
              <b><svg viewBox="0 2 60 60"><path d="M22 38L39 21" stroke="#464646" stroke-width="2.600" /><rect x="19" y="36" width="5" height="5" fill="#fff" stroke="#464646" stroke-width="1.600" /><rect x="37" y="18" width="5" height="5" fill="#fff" stroke="#464646" stroke-width="1.600" /></svg></b>
              <b><svg viewBox="0 2 60 60"><path d="M29 18L42 25L40 39L25 42L18 30Z" fill="#464646" /></svg></b>
              <b><svg viewBox="0 2 60 60"><rect x="20" y="20" width="20" height="20" fill="#464646" /></svg></b>
              <b><svg viewBox="0 2 60 60"><circle cx="30" cy="30" r="11" fill="#464646" /></svg></b>
              <b><svg viewBox="0 2 60 60"><path fill-rule="evenodd" d="M30 18a9 9 0 0 1 9 9c0 6-6 10-9 15c-3-5-9-9-9-15a9 9 0 0 1 9-9zm0 5a4.200 4.200 0 1 0 0 8.400a4.200 4.200 0 1 0 0-8.400z" fill="#464646" /></svg></b>
              <b><svg viewBox="0 1 60 60"><circle cx="29" cy="29" r="11" fill="none" stroke="#464646" stroke-width="2" /></svg></b>
            </div>
            <div class="bar edit">
              <b><svg viewBox="0 1 60 60" fill="none" stroke="#464646"><path d="M32 21H24a4 4 0 0 0-4 4V36a4 4 0 0 0 4 4H34a4 4 0 0 0 4-4V30" stroke-width="2.600" /><path d="M28 33L37.500 22.500" stroke-width="4.500" /><path d="M39.500 20.500L42 18" stroke-width="4.500" /></svg></b>
              <b><svg viewBox="0 2 60 60" fill="none" stroke="#464646"><path d="M19 21.500H41M26 20V17.500H34V20" stroke-width="2.400" /><path d="M21.500 24V41H38.500V24Z" stroke-width="2.400" /><path d="M26 26V39M30 26V39M34 26V39" stroke-width="2" /></svg></b>
            </div>
            <div class="layers">
              <div v-for="(b, i) in baseMaps" :key="b" class="opt"><i :class="['radio', { on: i === 0 }]"></i><span>{{ b }}</span></div>
              <hr />
              <div v-for="(o, i) in overlays" :key="i" class="opt"><i :class="['check', { on: o }]"><svg v-if="o" viewBox="0 0 26 26"><path d="M6 14L11 19.500L20 6.500" fill="none" stroke="#fff" stroke-width="3.600" /></svg></i><span>GeoJSON Layer</span></div>
            </div>
            <div class="bar full"><b><svg viewBox="0 0 60 60"><path d="M20.500 27V20.500H27M33 20.500H39.500V27M39.500 33V39.500H33M27 39.500H20.500V33" fill="none" stroke="#000" stroke-width="3.400" /></svg></b></div>
            <div class="scale"><div class="km">1 km</div><div class="ft">3000 ft</div></div>
            <div class="credit"><i class="flag"></i><em>Leaflet</em><span>|</span><span>©</span><em>OpenStreetMap</em><span>contributors</span></div>
          </div>
        </section>

        <section class="card">
          <div class="head cyan small"><span class="t-ctrl">Layer Controls</span></div>
          <div class="body">
            <div class="row top"><span class="muted t-avail">Available Layers:</span><a class="btn primary"><svg class="ic" :viewBox="box('sync')"><path :d="icons.sync.d" /></svg><span class="t-ref">Refresh Layers</span></a></div>
            <div class="list">
              <div v-for="l in layers" :key="l" class="item">
                <div><div class="name">{{ l }}</div><div class="kind">vector</div></div>
                <a class="btn primary"><svg class="ic" :viewBox="box('brain')"><path :d="icons.brain.d" /></svg><span class="t-an">Analyze</span></a>
              </div>
            </div>
          </div>
        </section>
      </div>

      <div class="right">
        <section class="card">
          <div class="head green"><svg class="ic" :viewBox="box('robot')"><path :d="icons.robot.d" /></svg><span class="t-chat">AI Chat Assistant</span></div>
          <div class="body">
            <div class="chat">
              <div class="msg you"><p><strong>You:</strong> tell more about the layer related to york</p><small>06:14:50</small></div>
              <div class="msg ai">
                <p v-for="(r, i) in reply" :key="i" :style="{ letterSpacing: r.track + 'px' }"><template v-if="i === 0"><strong>AI Assistant:</strong>&nbsp;</template>{{ r.text }}</p>
              </div>
            </div>
            <div class="ask"><div class="prompt">Ask me about your GIS data...</div><div class="send"><svg class="ic" :viewBox="box('plane')"><path :d="icons.plane.d" /></svg></div></div>
            <div class="hint">Press Enter to send</div>
            <div class="quick">Quick Actions:</div>
            <div class="stack">
              <a class="btn info"><svg class="ic" :viewBox="box('info')"><path :d="icons.info.d" /></svg><span class="t-q1">Analyze Data</span></a>
              <a class="btn warn"><svg class="ic" :viewBox="box('palette')"><path :d="icons.palette.d" /></svg><span class="t-q2">Styling Suggestions</span></a>
              <a class="btn ok"><svg class="ic" :viewBox="box('file')"><path :d="icons.file.d" /></svg><span class="t-q3">Project Description</span></a>
            </div>
          </div>
        </section>

        <section class="card">
          <div class="head gray small"><svg class="ic" :viewBox="box('server')"><path :d="icons.server.d" /></svg><span class="t-stat">AI Status</span></div>
          <div class="body">
            <div class="row"><span class="t-llm">Local LLM (Ollama):</span><span class="badge">Not Available</span></div>
            <div class="row second"><span class="t-model">Model:</span><span class="muted t-nc">Not Connected</span></div>
            <a class="btn mute"><svg class="ic" :viewBox="box('sync')"><path :d="icons.sync.d" /></svg><span class="t-chk">Check Status</span></a>
          </div>
        </section>
      </div>
    </main>

    <footer class="footer">
      <div class="powered">Powered by <u>Mundi AI</u></div>
      <div class="rights">© 2024 Zoal AI. All rights reserved.</div>
    </footer>
  </div>
</template>

<style>
body { background: #f8f9fb; }
</style>

<style scoped>
.page, .page * { box-sizing: border-box; }
.page { width: 2992px; height: 2396px; background: #f8f9fb; display: flex; flex-direction: column; font-family: "DejaVu Sans Condensed", "DejaVu Sans", sans-serif; font-stretch: condensed; font-size: 32px; line-height: 48px; letter-spacing: -0.6px; color: #212529; overflow: hidden; }
.ic { height: 1em; width: auto; fill: currentColor; flex: none; display: block; }
.ic + span { padding-top: 2px; }

.navbar { height: 112px; flex: none; background: #fff; box-shadow: 0 4px 8px rgba(0, 0, 0, 0.1); display: flex; justify-content: space-between; padding: 0 216px 0 248px; position: relative; }
.links { display: flex; gap: 32px; }
.link { display: flex; align-items: center; gap: 8px; color: #595959; white-space: nowrap; }
.l2 { letter-spacing: -0.2px; }
.l3 { letter-spacing: -0.15px; }
.caret { width: 0; height: 0; border: 9.6px solid transparent; border-top-color: #595959; border-bottom: 0; margin-left: 10px; }

.main { display: flex; gap: 48px; padding: 48px 224px 0; flex: none; height: 2124px; align-items: flex-start; }
.left { width: 1680px; flex: none; display: flex; flex-direction: column; gap: 32px; }
.right { width: 816px; flex: none; display: flex; flex-direction: column; gap: 32px; }
.card { background: #fff; border-radius: 10px 10px 30px 30px; box-shadow: 0 8px 16px rgba(0, 0, 0, 0.1); }
.head { height: 82px; padding: 0 32px; display: flex; align-items: center; gap: 16px; color: #fff; font-size: 40px; border-bottom: 2px solid rgba(0, 0, 0, 0.17); border-radius: 10px 10px 0 0; white-space: nowrap; }
.t-map { letter-spacing: -0.3px; }
.t-chat { letter-spacing: -0.35px; }
.head.small { height: 72px; font-size: 32px; }
.blue { background: #0d6efd; }
.cyan { background: #12caf0; }
.cyan .t-ctrl { padding: 2px 0 0 16px; letter-spacing: -0.5px; }
.green { background: #198754; }
.gray { background: #6c757d; }
.t-stat { letter-spacing: -0.1px; }
.body { padding: 32px; }
.row { display: flex; justify-content: space-between; align-items: center; white-space: nowrap; }
.muted { color: #595c5f; }
.t-avail { letter-spacing: -0.55px; padding-top: 2px; }
.btn { height: 62px; border: 2px solid; border-radius: 8px; display: inline-flex; align-items: center; justify-content: center; gap: 8px; padding: 0 16px; font-size: 28px; line-height: 42px; letter-spacing: -0.5px; white-space: nowrap; }
.primary { color: #0d6efd; }
.info { color: #0dcaf0; }
.warn { color: #ffc107; }
.ok { color: #198754; }
.mute { color: #6c757d; }
.t-ref { letter-spacing: -0.3px; }
.t-q3 { letter-spacing: -0.4px; }

.list { margin-top: 16px; border: 2px solid #dee2e6; border-radius: 12px; }
.item { height: 130px; padding: 0 32px; display: flex; justify-content: space-between; align-items: center; border-bottom: 2px solid #dee2e6; }
.item:last-child { border-bottom: 0; height: 128px; }
.name { font-weight: 700; height: 50px; line-height: 53px; letter-spacing: -0.2px; }
.kind { font-size: 28px; line-height: 52px; height: 50px; color: #595c5f; letter-spacing: -0.8px; }

.chat { height: 600px; border: 2px solid #dee2e6; border-radius: 12px; overflow: hidden; padding: 0 20px; display: flex; flex-direction: column; gap: 30px; }
.msg { flex: none; border-left: 8px solid; border-radius: 16px; padding: 21px 20px 20px; white-space: nowrap; }
.msg p { margin: 0; }
.you p { letter-spacing: -0.2px; }
.you strong { letter-spacing: -0.6px; }
.ai strong { letter-spacing: 0.1px; }
.msg small { display: block; font-size: 28px; line-height: 42px; color: #595c5f; padding-top: 15px; margin-bottom: -1px; }
.you { background: #e3f2fd; border-color: #2196f3; height: 146px; }
.ai { background: #f3e5f5; border-color: #9c27b0; }

.ask { display: flex; height: 92px; margin-top: 30px; }
.prompt { flex: 1; border: 4px solid #e9ecef; border-right-width: 2px; border-radius: 22px 0 0 22px; padding: 0 24px; line-height: 86px; color: #595c5f; letter-spacing: -0.13px; }
.send { width: 136px; background: #3498db; color: #fff; border-radius: 0 46px 46px 0; display: flex; align-items: center; justify-content: center; }
.hint { font-size: 28px; line-height: 42px; color: #595c5f; padding-top: 6px; letter-spacing: -0.2px; }
.quick { padding-top: 28px; height: 86px; letter-spacing: -0.35px; }
.stack { display: flex; flex-direction: column; gap: 16px; }
.t-llm { letter-spacing: -0.1px; padding-top: 2px; }
.t-model { letter-spacing: -0.4px; }
.t-nc { letter-spacing: -0.3px; }
.badge { background: #dc3545; color: #fff; border-radius: 12px; font-size: 24px; font-weight: 700; height: 41px; line-height: 43px; padding: 0 16px; letter-spacing: -0.1px; }
.second { padding: 17px 0 16px; }
.mute { margin-bottom: 0; vertical-align: top; }

.footer { flex: none; height: 160px; background: #212529; color: #f8f9fa; display: flex; justify-content: space-between; padding: 49px 200px 0; white-space: nowrap; letter-spacing: -0.17px; }
.powered { padding-top: 16px; letter-spacing: -0.25px; }
.powered u { text-decoration-thickness: 3px; text-underline-offset: 3px; letter-spacing: 0.35px; }

.map { position: relative; height: 1000px; border-radius: 30px; overflow: hidden; font-family: "Liberation Sans", Arial, sans-serif; letter-spacing: 0; font-stretch: normal; }
.tiles { position: absolute; inset: 0; width: 1680px; height: 1000px; display: block; }
.ln polyline { fill: none; stroke-linejoin: round; stroke-linecap: round; vector-effect: non-scaling-stroke; }
.ln.rail polyline { stroke-linecap: butt; }
.lb { font-family: "Noto Sans", "Open Sans", sans-serif; font-size: 24px; fill: #3f3f3f; stroke: rgba(255, 255, 255, 0.65); stroke-width: 3px; paint-order: stroke; }
.lb.city { font-size: 27px; }
.lb.park { font-style: italic; fill: #3b8a4b; font-size: 23px; }
.lb.uni { font-style: italic; fill: #6b6132; }
.lb.ward { font-style: italic; fill: #a13352; font-size: 22px; }
.lb.road { font-size: 19px; fill: #5b4530; stroke: none; }
.lb.line { font-size: 19px; fill: #6b6b6b; }
.lb.river { font-size: 19px; fill: #5f8fc8; font-style: italic; }
.lb.county { font-size: 21px; fill: #9a7fa6; stroke: none; font-style: italic; }
.ref { font-family: "Noto Sans", sans-serif; font-size: 21px; fill: #6f5227; }
.ref.trunk { fill: #7a2f23; }

.bar { position: absolute; border: 4px solid rgba(0, 0, 0, 0.2); border-radius: 8px; background-clip: padding-box; width: 68px; left: 20px; display: flex; flex-direction: column; overflow: hidden; }
.bar b { display: block; height: 60px; background: #fff; border-bottom: 2px solid #ccc; overflow: hidden; }
.bar b:last-child { border-bottom: 0; }
.bar svg { display: block; width: 60px; height: 60px; }
.zoom { top: 20px; }
.draw { top: 288px; }
.edit { top: 680px; }
.full { left: 1592px; top: 454px; }
.search { position: absolute; left: 20px; top: 168px; width: 494px; height: 80px; background: #fff; border-radius: 8px; box-shadow: 0 4px 12px rgba(0, 0, 0, 0.35); padding: 10px; display: flex; justify-content: space-between; align-items: center; }
.field { width: 400px; height: 60px; border: 2px solid #ccc; border-radius: 6px; font-size: 25px; line-height: 59px; padding-left: 10px; color: #757575; letter-spacing: -0.4px; }
.go { width: 64px; height: 56px; background: #007cbf; border-radius: 6px; }
.go svg { display: block; }
.layers { position: absolute; left: 1399px; top: 20px; width: 261px; height: 414px; border: 4px solid rgba(0, 0, 0, 0.2); border-radius: 10px; background: #fff; background-clip: padding-box; padding: 12px 0 0 11px; font-size: 26px; color: #333; }
.opt { height: 40px; display: flex; align-items: center; gap: 7px; line-height: 40px; letter-spacing: -0.1px; }
.opt span { padding-top: 2px; white-space: nowrap; }
.opt i { width: 26px; height: 26px; border: 2px solid #767676; background: #fff; flex: none; margin-top: -2px; }
.radio { border-radius: 50%; }
.radio.on { border-color: #0075ff; background: #0075ff; box-shadow: inset 0 0 0 3px #fff; }
.check { border-radius: 5px; }
.check.on { border-color: #0075ff; background: #0075ff; }
.check svg { display: block; margin: -2px; width: 26px; height: 26px; }
.layers hr { border: 0; border-top: 2px solid #ddd; margin: 10px 0 10px -11px; }
.scale { position: absolute; left: 10px; top: 921px; font-size: 24px; color: #333; display: flex; flex-direction: column; align-items: flex-start; }
.km { width: 178px; height: 37px; border: 4px solid #777; border-top: 0; background: rgba(255, 255, 255, 0.8); padding-left: 10px; line-height: 35px; }
.ft { width: 162px; height: 32px; border: 4px solid #777; border-top: 0; border-bottom: 0; background: rgba(255, 255, 255, 0.8); padding-left: 10px; line-height: 35px; }
.credit { position: absolute; right: 0; bottom: 0; height: 34px; background: rgba(255, 255, 255, 0.8); padding: 0 10px; font-size: 24px; line-height: 34px; display: flex; align-items: center; gap: 6.5px; color: #333; white-space: nowrap; letter-spacing: 0.2px; }
.credit em { font-style: normal; color: #0078a8; }
.flag { width: 24px; height: 16px; background: linear-gradient(#4c7be1 50%, #ffd500 50%, #ffd500 82%, #e0bc00 82%); }
</style>
